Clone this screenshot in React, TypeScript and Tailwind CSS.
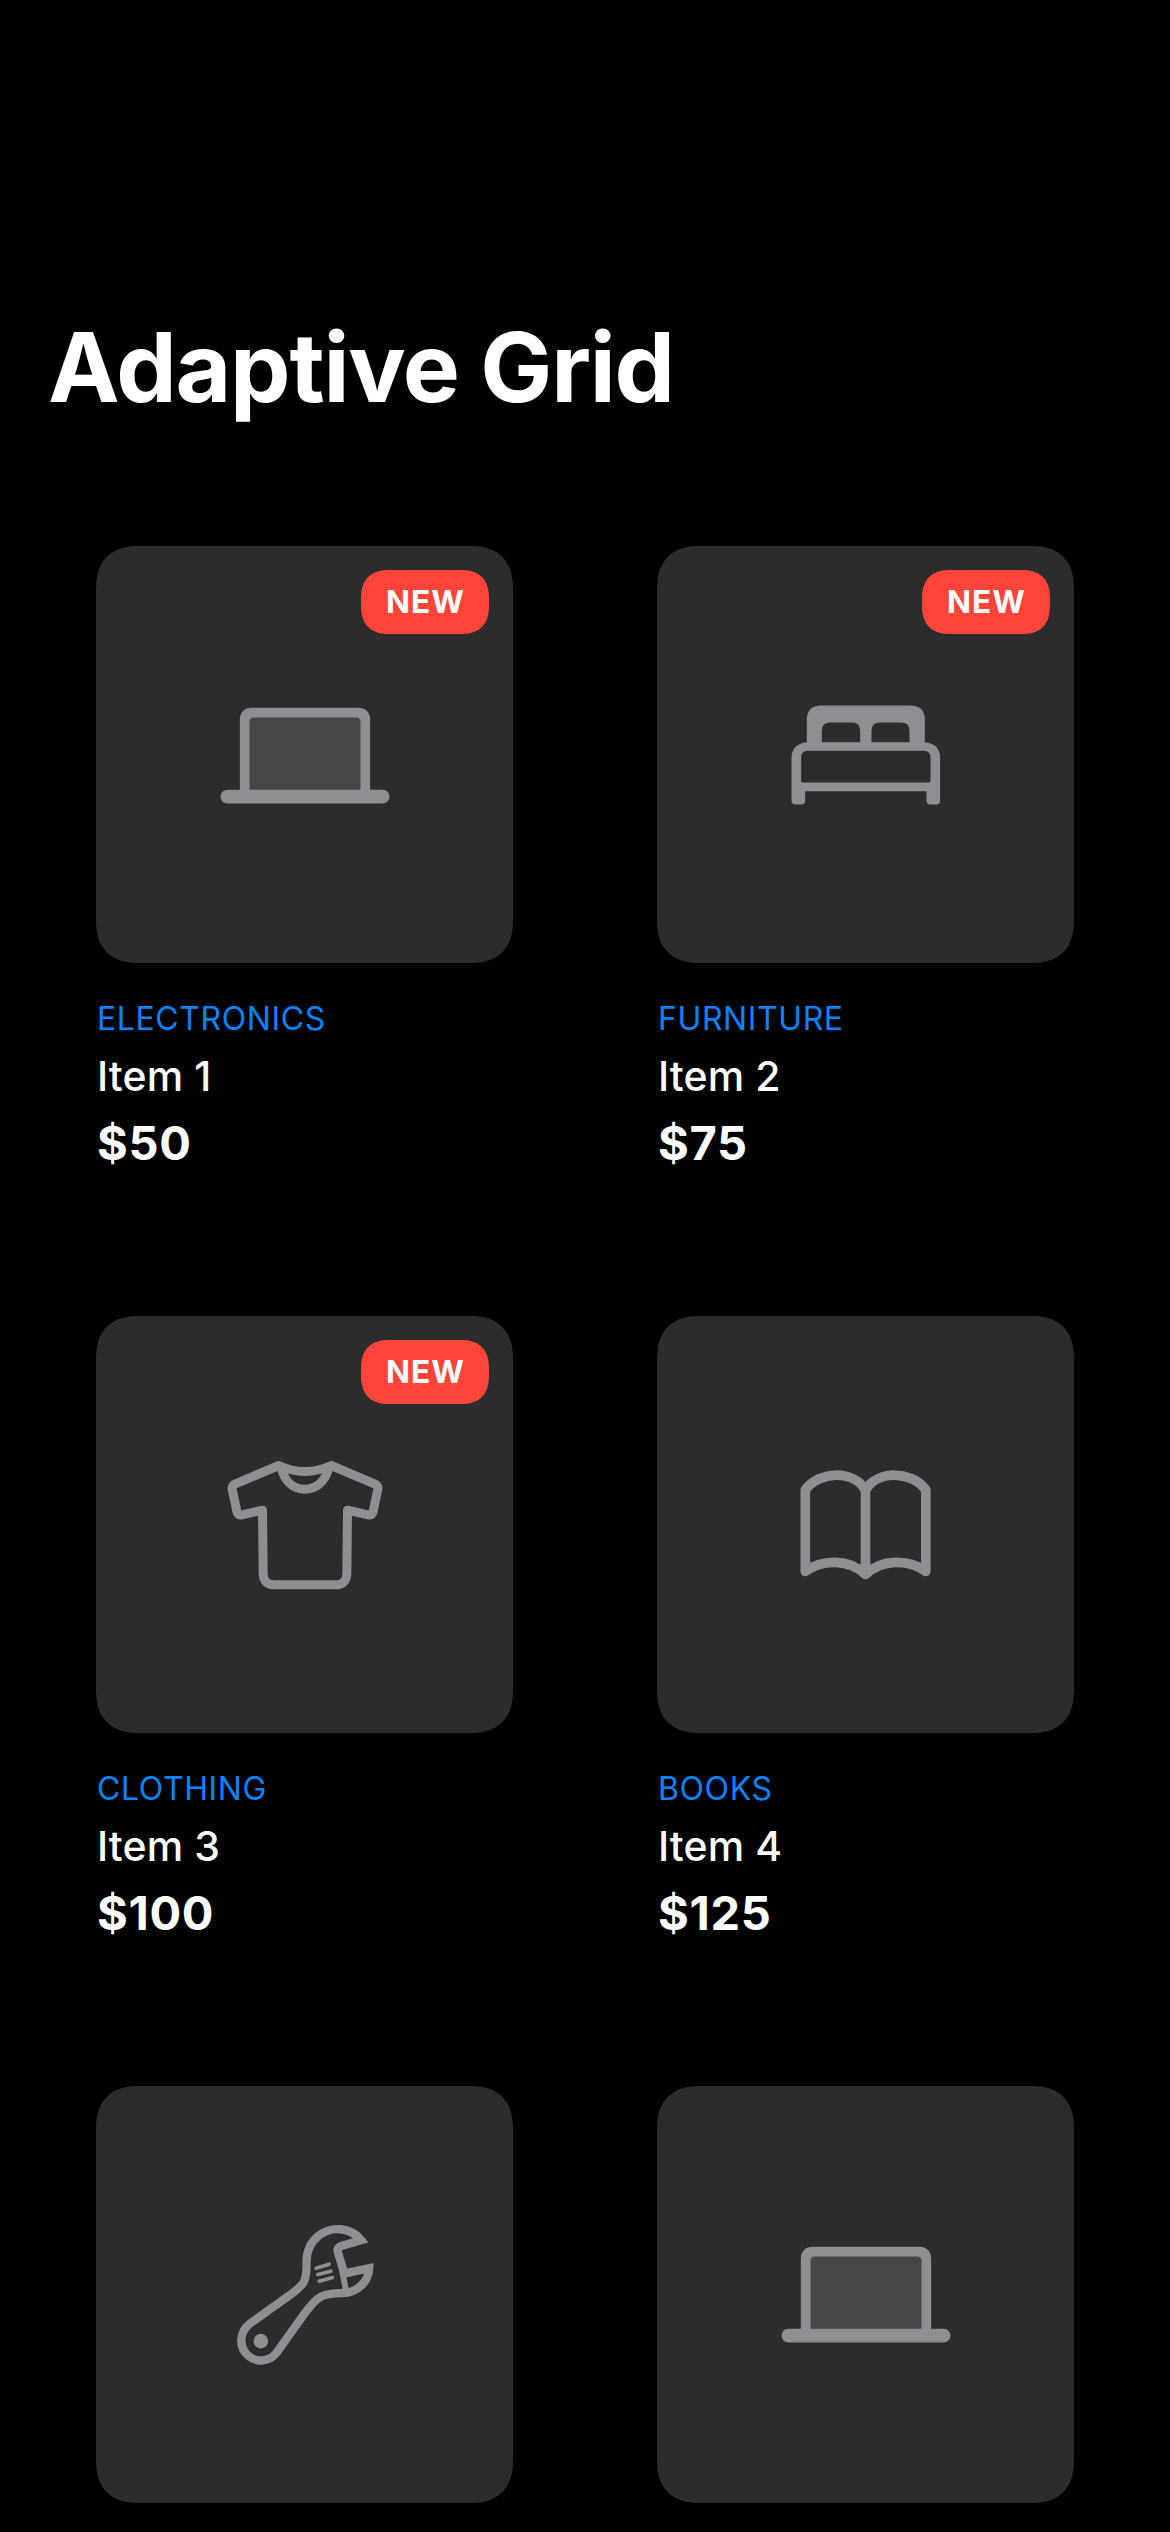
import type { ReactNode } from "react";

const GRAY = "#8e8e93";

function Laptop({ className = "" }: { className?: string }) {
  return (
    <svg className={`size-[200px] ${className}`} viewBox="-16.5 -106.5 600 600" fill="none">
      <rect x="112" y="76" width="343" height="228" rx="14" fill="#464648" />
      <path d="M102.5 300V88Q102.5 66.500 124 66.500H443Q464.500 66.500 464.500 88V300" stroke={GRAY} strokeWidth="29" />
      <path d="M117 96V80H133Q117 80 117 96ZM450 96V80H434Q450 80 450 96Z" fill={GRAY} />
      <rect x="30" y="298" width="507" height="41" rx="20.500" fill={GRAY} />
    </svg>
  );
}

function Bed() {
  return (
    <svg className="size-[200px]" viewBox="-43.5 -106.5 600 600">
      <path
        fill={GRAY}
        fillRule="evenodd"
        d="M79 155V87Q79 45 123 45H389Q433 45 433 87V155Q479 160 479 203V330Q479 342 467 342H450Q438 342 438 330V302H74V330Q74 342 62 342H45Q33 342 33 330V203Q33 160 79 155ZM124 155H239V121Q239 96 214 96H150Q124 96 124 121ZM273 155H387V121Q387 96 361 96H299Q273 96 273 121ZM82 181Q62 181 62 201V271Q62 276 67 276H445Q450 276 450 271V201Q450 181 430 181Z"
      />
    </svg>
  );
}

function Shirt() {
  return (
    <svg className="size-[200px]" viewBox="-31.5 -61.5 600 600" fill="none" stroke={GRAY} strokeWidth="27" strokeLinejoin="round">
      <path d="M190 60L60 115Q47 121 51 136L64 197Q67 210 79 208L141 194L143 384Q144 418 177 418H360Q393 418 394 384L396 194L458 208Q470 210 473 197L486 136Q490 121 477 115L347 60Q268 96 190 60Z" />
      <path d="M197 66C207 108 234 131 268 131S330 108 340 66" />
    </svg>
  );
}

function Book() {
  return (
    <svg className="size-[200px]" viewBox="-58.5 -91.5 600 600" fill="none" stroke={GRAY} strokeWidth="29" strokeLinejoin="round">
      <path d="M59.500 103C101 46 202 43 240 103C278 43 379 46 421 103V348C370 310 288 310 240 357C192 310 110 310 59.500 348Z" />
      <path d="M240 103V352" />
    </svg>
  );
}

function Wrench() {
  return (
    <svg className="size-[200px]" viewBox="-61.5 -46.5 600 600" fill="none" stroke={GRAY} strokeWidth="25">
      <path d="M407 89C375 50 318 45 279 76C250 99 242 128 243 160C244 214 235 222 196 252L75 338C41 363 38 410 69 436C94 458 133 453 153 427L238 308C276 256 290 249 348 248C398 248 429 212 431 173L366 187Q357 189 353 178L337 124Q333 110 349 106Z" />
      <path d="M343 140L361 240" strokeWidth="18" />
      <path d="M355 190H375" strokeWidth="16" />
      <path d="M272 173L311 161M277 192L316 182M281 212L321 201" strokeWidth="11" strokeLinecap="round" />
      <circle cx="106" cy="392" r="22" fill={GRAY} stroke="none" />
    </svg>
  );
}

type Item = { icon: ReactNode; isNew?: boolean; category?: string; name?: string; price?: string };

const items: Item[] = [
  { icon: <Laptop />, isNew: true, category: "ELECTRONICS", name: "Item 1", price: "$50" },
  { icon: <Bed />, isNew: true, category: "FURNITURE", name: "Item 2", price: "$75" },
  { icon: <Shirt />, isNew: true, category: "CLOTHING", name: "Item 3", price: "$100" },
  { icon: <Book />, category: "BOOKS", name: "Item 4", price: "$125" },
  { icon: <Wrench /> },
  { icon: <Laptop className="mb-0.5" /> },
];

function Card({ icon, isNew, category, name, price }: Item) {
  return (
    <article className="h-[770px] w-[417px]">
      <div className="relative flex size-[417px] items-center justify-center rounded-[44px] bg-[#2c2c2e] [corner-shape:superellipse(1.3)]">
        {icon}
        {isNew && (
          <span className="absolute right-6 top-6 flex h-16 w-32 items-center justify-center rounded-[29px] bg-[#ff453a] pl-px text-[31.5px] font-bold leading-none tracking-[1px] text-white [corner-shape:superellipse(1.3)]">
            NEW
          </span>
        )}
      </div>
      {category && (
        <div className="pl-px pt-9">
          <p className="text-[32px] leading-[40px] tracking-[0.6px] text-[#0a84ff]">{category}</p>
          <p className="mt-[7px] text-[41px] font-medium leading-[60px] tracking-[0.1px] text-white">{name}</p>
          <p className="mt-[7px] text-[47px] font-bold leading-[60px] tracking-[0.7px] text-white">{price}</p>
        </div>
      )}
    </article>
  );
}

export default function App() {
  return (
    <main className="h-[2532px] w-[1170px] overflow-hidden bg-black font-['Inter',sans-serif]">
      <h1 className="px-12 pt-[307px] text-[96px] font-bold leading-[120px] tracking-[-1.2px] text-white">Adaptive Grid</h1>
      <section className="mt-[119px] grid grid-cols-[417px_417px] gap-x-36 px-24">
        {items.map((item, i) => (
          <Card key={i} {...item} />
        ))}
      </section>
    </main>
  );
}
